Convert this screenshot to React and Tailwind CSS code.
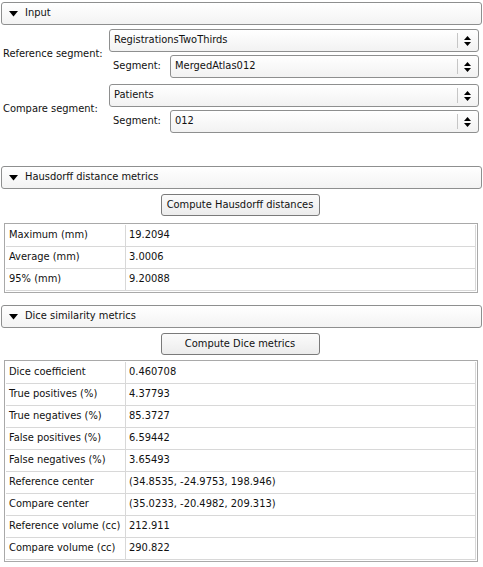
import React from "react";

const font = { fontFamily: '"DejaVu Sans Condensed", "Liberation Sans", sans-serif' };

function Header({ title }) {
  return (
    <div className="mx-[1px] flex h-[23px] items-center rounded-[3px] border border-[#8e8f8f] bg-gradient-to-b from-white to-[#f3f3f3] pl-[7px]">
      <svg width="9" height="6" viewBox="0 0 9 6" className="mr-[7px]">
        <polygon points="0,0 9,0 4.5,5.5" fill="#000" />
      </svg>
      <span>{title}</span>
    </div>
  );
}

function Combo({ value }) {
  return (
    <div className="flex h-[23px] flex-1 items-center rounded-[3px] border border-[#8e8f8f] bg-gradient-to-b from-white to-[#f2f2f2]">
      <span className="flex-1 pl-[4px]">{value}</span>
      <div className="h-[15px] w-px bg-[#c6c6c6]" />
      <svg width="20" height="12" viewBox="0 0 20 12">
        <polygon points="6,5 13,5 9.5,1" fill="#000" />
        <polygon points="6,7 13,7 9.5,11" fill="#000" />
      </svg>
    </div>
  );
}

function SegmentBlock({ label, node, segment }) {
  return (
    <div className="flex items-center">
      <div className="w-[109px] pl-[3px] pt-[2px]">{label}</div>
      <div className="mr-[4px] flex flex-1 flex-col gap-[3px]">
        <div className="flex">
          <Combo value={node} />
        </div>
        <div className="flex items-center">
          <span className="w-[61px] pl-[4px]">Segment:</span>
          <Combo value={segment} />
        </div>
      </div>
    </div>
  );
}

function Button({ label }) {
  return (
    <div className="flex justify-center">
      <div className="ml-[-3px] flex h-[22px] w-[159px] items-center justify-center rounded-[3px] border border-[#7a7a7a] bg-gradient-to-b from-[#fbfbfb] to-[#ececec]">
        {label}
      </div>
    </div>
  );
}

function Table({ rows }) {
  return (
    <div className="mx-[4px] mr-[5px] border border-[#a9a9a9] p-px">
      {rows.map(([k, v]) => (
        <div key={k} className="flex h-[22px] items-center border-b border-[#d8d8d8]">
          <div className="flex h-full w-[120px] items-center border-r border-[#d8d8d8] pl-[3px]">
            {k}
          </div>
          <div className="flex h-full flex-1 items-center border-r border-[#d8d8d8] pl-[3px]">
            {v}
          </div>
        </div>
      ))}
    </div>
  );
}

const hausdorff = [
  ["Maximum (mm)", "19.2094"],
  ["Average (mm)", "3.0006"],
  ["95% (mm)", "9.20088"],
];

const dice = [
  ["Dice coefficient", "0.460708"],
  ["True positives (%)", "4.37793"],
  ["True negatives (%)", "85.3727"],
  ["False positives (%)", "6.59442"],
  ["False negatives (%)", "3.65493"],
  ["Reference center", "(34.8535, -24.9753, 198.946)"],
  ["Compare center", "(35.0233, -20.4982, 209.313)"],
  ["Reference volume (cc)", "212.911"],
  ["Compare volume (cc)", "290.822"],
];

export default function App() {
  return (
    <div
      className="h-[567px] w-[483px] overflow-hidden whitespace-nowrap bg-white pt-[2px] text-[11px] text-[#111]"
      style={font}
    >
      <Header title="Input" />
      <div className="mt-[4px] flex flex-col gap-[6px]">
        <SegmentBlock
          label="Reference segment:"
          node="RegistrationsTwoThirds"
          segment="MergedAtlas012"
        />
        <SegmentBlock label="Compare segment:" node="Patients" segment="012" />
      </div>

      <div className="mt-[33px]">
        <Header title="Hausdorff distance metrics" />
      </div>
      <div className="mt-[5px]">
        <Button label="Compute Hausdorff distances" />
      </div>
      <div className="mt-[7px]">
        <Table rows={hausdorff} />
      </div>

      <div className="mt-[12px]">
        <Header title="Dice similarity metrics" />
      </div>
      <div className="mt-[5px]">
        <Button label="Compute Dice metrics" />
      </div>
      <div className="mt-[5px]">
        <Table rows={dice} />
      </div>
    </div>
  );
}
